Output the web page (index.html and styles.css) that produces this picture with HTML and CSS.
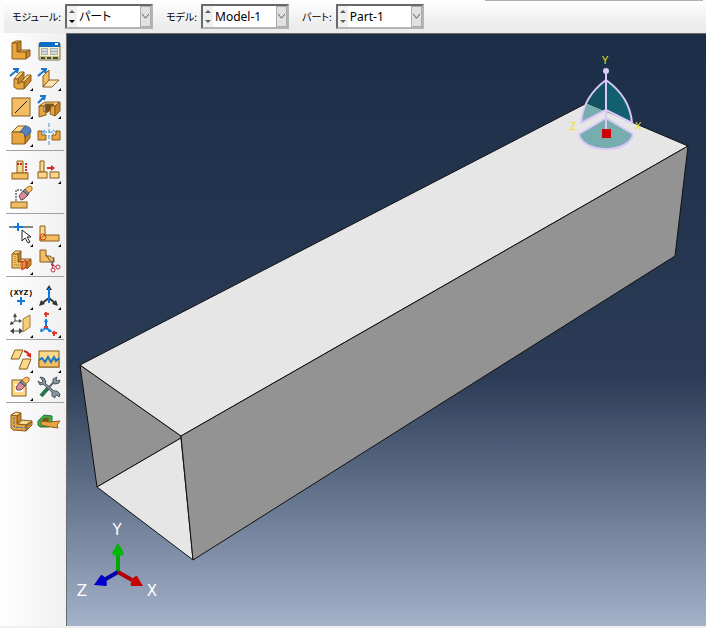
FILE: index.html
```html
<!DOCTYPE html>
<html lang="ja">
<head>
    <meta charset="UTF-8">
    <meta name="viewport" content="width=device-width, initial-scale=1.0">
    <title>Part-1</title>
    <link rel="stylesheet" href="styles.css">
</head>
<body>
    <header class="context-bar">
        <div class="field">
            <label for="module">モジュール:</label>
            <div class="combo">
                <span class="spinner"><i class="up"></i><i class="down active"></i></span>
                <select id="module"><option>パート</option></select>
                <span class="chevron"><svg viewBox="0 0 10 22"><path d="M1 8l4 5 4-5"/></svg></span>
            </div>
        </div>
        <div class="field">
            <label for="model">モデル:</label>
            <div class="combo">
                <span class="spinner"><i class="up"></i><i class="down"></i></span>
                <select id="model"><option>Model-1</option></select>
                <span class="chevron"><svg viewBox="0 0 10 22"><path d="M1 8l4 5 4-5"/></svg></span>
            </div>
        </div>
        <div class="field">
            <label for="part">パート:</label>
            <div class="combo">
                <span class="spinner"><i class="up"></i><i class="down"></i></span>
                <select id="part"><option>Part-1</option></select>
                <span class="chevron"><svg viewBox="0 0 10 22"><path d="M1 8l4 5 4-5"/></svg></span>
            </div>
        </div>
    </header>

    <div class="workspace">
        <nav class="toolbox">
            <!-- create / edit solids -->
            <div class="tool-group">
                <button class="tool" aria-label="Create part">
                    <svg viewBox="0 0 28 28" class="solid">
                        <path class="hi" d="M5 7l4-2h5l-4 2zM10 16l4-2h9l-4 2z"/>
                        <path class="lo" d="M10 7l4-2v9l-4 2zM19 16l4-2v6l-4 3z"/>
                        <path d="M5 7h5v9h9v7H5z"/>
                    </svg>
                </button>
                <button class="tool" aria-label="Part manager">
                    <svg viewBox="0 0 28 28">
                        <rect x="4" y="7" width="21" height="17" rx="1" fill="#fff0c8" stroke="#6b6b4c"/>
                        <path d="M4 11V8q0-2 2-2h17q2 0 2 2v3z" fill="#0a6bc8"/>
                        <path d="M20 8h3" stroke="#fff" stroke-width="2"/>
                        <path d="M6 12h7v7H6zM15 12h8v7h-8z" fill="#a9b4b8"/>
                        <path d="M7 14h5M16 14h6M7 17h5M16 17h6" stroke="#fff"/>
                        <path d="M5 20h19v3H5z" fill="#c9c48f"/>
                        <path d="M6 22h4M12 22h4M18 22h5" stroke="#4c4a2c" stroke-width="2"/>
                    </svg>
                </button>
                <button class="tool more" aria-label="Solid extrude">
                    <svg viewBox="0 0 28 28" class="solid">
                        <path class="hi" d="M7 15l6-7h4l-6 7zM14 18l6-7h4l-7 7z"/>
                        <path class="lo" d="M11 15l6-7v6l-3 4-3 2zM17 18l7-7v6l-7 8z"/>
                        <path d="M7 15h4v5l3-2h3v7h-7l-3-2z"/>
                        <path class="blue" d="M3 12l7-6M6 5h5l-1 4"/>
                    </svg>
                </button>
                <button class="tool more" aria-label="Shell extrude">
                    <svg viewBox="0 0 28 28" class="solid">
                        <path class="mid" d="M8 12l6-6v10l-6 7z"/>
                        <path class="pale" d="M14 16h10l-7 7H8z"/>
                        <path class="blue" d="M3 12l7-6M6 5h5l-1 4"/>
                    </svg>
                </button>
                <button class="tool more" aria-label="Wire">
                    <svg viewBox="0 0 28 28" class="solid">
                        <rect class="mid" x="5" y="6" width="18" height="18"/>
                        <path d="M8 21L20 9" stroke="#222"/>
                    </svg>
                </button>
                <button class="tool more" aria-label="Cut extrude">
                    <svg viewBox="0 0 28 28" class="solid">
                        <path class="hi" d="M4 14l6-4h15l-5 4z"/>
                        <path class="dark" d="M10 12h9l-3 6-5 3z"/>
                        <path d="M4 14h5v6l2-1v4l-7 2zM16 14h4v10l-5-2z"/>
                        <path class="lo" d="M20 14l5-4v9l-5 5z"/>
                        <path class="blue" d="M3 11l6-6M5 4h5l-1 4"/>
                    </svg>
                </button>
                <button class="tool more" aria-label="Round or fillet">
                    <svg viewBox="0 0 28 28" class="solid">
                        <path class="hi" d="M5 12l6-6h8l-6 6z"/>
                        <path class="lo" d="M18 16l5-6v8l-5 6z"/>
                        <path d="M5 12h8q5 0 5 5v7H5z"/>
                        <path d="M13 12l5-6q6 0 6 6l-6 5q0-5-5-5z" fill="#5484bd" stroke="#3d5f8c"/>
                    </svg>
                </button>
                <button class="tool" aria-label="Mirror part">
                    <svg viewBox="0 0 28 28" class="solid">
                        <path d="M3 11h4v4h4v5H3z"/>
                        <path d="M25 11h-4v4h-4v5h8z"/>
                        <path class="dashed" d="M14 3v23"/>
                        <path class="dashed" d="M8 12h12M10 10l-3 2 3 2M18 10l3 2-3 2"/>
                    </svg>
                </button>
            </div>
            <!-- feature editing -->
            <div class="tool-group">
                <button class="tool more" aria-label="Edit feature">
                    <svg viewBox="0 0 28 28" class="solid">
                        <path class="hi" d="M10 4h6v12h-6z"/>
                        <rect class="mid" x="5" y="16" width="16" height="6"/>
                        <path class="red" d="M10 7h6M19 6v10" stroke-dasharray="2 1"/>
                    </svg>
                </button>
                <button class="tool more" aria-label="Regenerate feature">
                    <svg viewBox="0 0 28 28" class="solid">
                        <path class="hi" d="M5 4h4v11H5z"/>
                        <rect class="hi" x="3" y="15" width="9" height="6"/>
                        <rect class="hi" x="15" y="15" width="9" height="6"/>
                        <path class="red" d="M12 11h5"/>
                        <path d="M16 8l4 3-4 3z" fill="#cf2b20" stroke="none"/>
                    </svg>
                </button>
                <button class="tool" aria-label="Delete feature">
                    <svg viewBox="0 0 28 28" class="solid">
                        <rect class="mid" x="4" y="17" width="16" height="6"/>
                        <path d="M9 16V5h7" fill="none" stroke="#222" stroke-dasharray="2 1"/>
                        <path d="M12 11l4-5 5 4-4 4-3 1z" fill="#d98a94" stroke="#704850"/>
                        <path d="M16 6l2-2 4 4-1 2z" fill="#758ba5" stroke="#46586f"/>
                        <path d="M18 4l4-3 3 1v3l-3 3z" fill="#f8c070" stroke="#a97020"/>
                    </svg>
                </button>
            </div>
            <!-- partition and repair -->
            <div class="tool-group">
                <button class="tool more" aria-label="Partition edge">
                    <svg viewBox="0 0 28 28">
                        <path d="M2 7h5M16 7h10" stroke="#111"/>
                        <path d="M7 7h9M11 3v8" stroke="#1179dd" stroke-width="2"/>
                        <path d="M15 10v11l3-3 3 5 2-1-3-5h4z" fill="#fff" stroke="#222"/>
                    </svg>
                </button>
                <button class="tool more" aria-label="Partition face">
                    <svg viewBox="0 0 28 28" class="solid">
                        <path class="hi" d="M5 6h5v9l-5 5z"/>
                        <path class="mid" d="M10 15h14v6H5v-3z"/>
                        <circle cx="8" cy="17" r="3" fill="none" stroke="#dd3a16"/>
                    </svg>
                </button>
                <button class="tool more" aria-label="Partition cell">
                    <svg viewBox="0 0 28 28" class="solid">
                        <path class="hi" d="M5 6l3-3h6l-3 3zM11 13l3-2h10l-4 3z"/>
                        <path class="lo" d="M11 6l3-3v9l-3 2zM20 14l4-3v6l-4 4z"/>
                        <path class="mid" d="M5 6h6v8h9v6H5z"/>
                        <path d="M8 8v9h7" fill="none" stroke="#8b742c" stroke-dasharray="1 1"/>
                        <path d="M15 14l4-2v7l-4 3z" fill="#ee8b4a" stroke="#d22415"/>
                    </svg>
                </button>
                <button class="tool" aria-label="Remove faces">
                    <svg viewBox="0 0 28 28" class="solid">
                        <path class="mid" d="M5 2h6v6h4l4 3v3H5z"/>
                        <path d="M11 7l8 11M19 9l-2 9" stroke="#555"/>
                        <circle cx="18" cy="22" r="2" fill="#fff" stroke="#bd2a38"/>
                        <circle cx="23" cy="19" r="2" fill="#fff" stroke="#bd2a38"/>
                        <path d="M16 16l5 3M17 16l1 4" stroke="#bd2a38"/>
                    </svg>
                </button>
            </div>
            <!-- datum geometry -->
            <div class="tool-group">
                <button class="tool more" aria-label="Datum point">
                    <svg viewBox="0 0 28 28">
                        <text class="xyz" x="14" y="12">(XYZ)</text>
                        <path d="M10 18h8M14 14v8" stroke="#1179dd" stroke-width="2"/>
                    </svg>
                </button>
                <button class="tool more" aria-label="Datum axis">
                    <svg viewBox="0 0 28 28">
                        <path d="M14 15l-8 6M14 15l7 6" stroke="#333" stroke-width="2"/>
                        <path d="M14 2l-3 5h6zM4 23l2-6 4 4zM23 23l-6-2 4-4z" fill="#333"/>
                        <path d="M14 5v15" stroke="#1179dd" stroke-width="2"/>
                    </svg>
                </button>
                <button class="tool more" aria-label="Datum plane">
                    <svg viewBox="0 0 28 28">
                        <path d="M8 4v6h5M8 10l-3 2M5 20h9" fill="none" stroke="#444" stroke-width="1"/>
                        <path d="M8 2l-2 4h4zM15 10l-3-2v4zM3 14l1-4 3 3zM3 20l4-3v6zM16 20l-4-3v6z" fill="#444"/>
                        <path d="M16 8l7-4v12l-7 5z" fill="#f8ce72" stroke="#9b7840"/>
                    </svg>
                </button>
                <button class="tool more" aria-label="Datum coordinate system">
                    <svg viewBox="0 0 28 28">
                        <path d="M11 11v6l-5 3M11 17l5 3" fill="none" stroke="#1179dd" stroke-width="2" stroke-dasharray="4 1"/>
                        <path d="M11 7l-2 4h4zM5 21l1-4 3 3zM17 21h-4l2-3z" fill="#1179dd"/>
                        <path d="M9 3h5M11 1v5M9 16h4M17 22h5M19 20v5" stroke="#e03a2e" stroke-width="2"/>
                    </svg>
                </button>
            </div>
            <!-- mesh tools -->
            <div class="tool-group">
                <button class="tool more" aria-label="Create midsurface">
                    <svg viewBox="0 0 28 28" class="solid">
                        <path class="hi" d="M8 4h8l-4 9H4z"/>
                        <path class="hi" d="M16 13h8l-4 10h-8z"/>
                        <path class="red" d="M17 5q4 1 5 4"/>
                        <path d="M19 9l5-2v5z" fill="#d22" stroke="none"/>
                    </svg>
                </button>
                <button class="tool more" aria-label="Repair small edges">
                    <svg viewBox="0 0 28 28" class="solid">
                        <rect class="hi" x="4" y="5" width="20" height="16"/>
                        <path class="mid" d="M4 14l3-2 3 4 3-5 3 5 3-5 2 4 3-3v9H4z"/>
                        <path class="blue" d="M4 14l3-2 3 4 3-5 3 5 3-5 2 4 3-3"/>
                    </svg>
                </button>
                <button class="tool more" aria-label="Edit mesh">
                    <svg viewBox="0 0 28 28" class="solid">
                        <rect class="hi" x="5" y="6" width="14" height="16"/>
                        <path d="M8 10h8v8H8z" fill="#fff" stroke="none"/>
                        <path d="M9 13l4-5 5 4-4 4h-4z" fill="#d98a94" stroke="#704850"/>
                        <path d="M13 8l2-2 4 4-1 2z" fill="#758ba5" stroke="#46586f"/>
                        <path d="M15 6l4-3 3 1v3l-3 3z" fill="#f8c070" stroke="#a97020"/>
                    </svg>
                </button>
                <button class="tool" aria-label="Geometry repair">
                    <svg viewBox="0 0 28 28">
                        <path d="M14 13l-8 9" stroke="#28744c" stroke-width="4"/>
                        <path d="M20 7l-8 8" stroke="#59656b" stroke-width="2"/>
                        <path d="M5 3l4 1 2 4-1 1 9 8h3l3 3-1 3-2-2-2 1v2l-3-2v-4l-9-8-3 1-2-4 3 2 2-2z" fill="#8b999f" stroke="#48565d"/>
                        <path d="M22 3l-4 2v4l2 1 4-1 1-3-3 1-1-1z" fill="#8b999f" stroke="#48565d"/>
                    </svg>
                </button>
            </div>
            <div class="tool-group">
                <button class="tool" aria-label="Assign midsurface">
                    <svg viewBox="0 0 28 28" class="solid">
                        <path class="hi" d="M4 6l5-3 5 1-4 3zM10 15l5-4 10 1-6 4z"/>
                        <path class="lo" d="M10 7l4-3v8l-4 3zM19 16l6-4v4l-6 6z"/>
                        <path d="M4 6l6 1v8l9 1v6l-13-1-2-2z"/>
                        <path d="M7 8v10l10 1 5-4" fill="none" stroke="#3975a7" stroke-dasharray="3 1"/>
                    </svg>
                </button>
                <button class="tool" aria-label="Offset faces">
                    <svg viewBox="0 0 28 28" class="solid">
                        <path d="M3 12l6-6 8 1v4l-3 7H5l-2-2z" fill="#2fb64b" stroke="#27713a"/>
                        <path class="dark" d="M7 12l2-3h5l-1 3z"/>
                        <path d="M6 12l8 1 11-1-3 4 1 3-7-1-10-2z"/>
                    </svg>
                </button>
            </div>
        </nav>

        <main class="viewport">
            <svg viewBox="67 34 639 592" preserveAspectRatio="xMinYMin meet">
                <!-- hollow beam -->
                <g class="beam">
                    <path class="side" d="M80 365L181 436V438L97 487z"/>
                    <path class="face" d="M97 487L181 438L193 560z"/>
                    <path class="face" d="M80 365L587 103L688 146L181 436z"/>
                    <path class="side" d="M181 436L688 146L675 256L193 560z"/>
                </g>

                <!-- view compass -->
                <g class="compass">
                    <path class="fan" d="M606 80Q583 97 581 123L606 110z"/>
                    <path class="fan solid-fan" d="M606 80Q630 97 632 123L606 110z"/>
                    <path class="fan" d="M606 118L579 134C582 154 630 154 633 134z"/>
                    <path d="M606 71V130"/>
                    <circle cx="606" cy="71" r="3"/>
                    <rect x="602" y="129" width="9" height="9"/>
                    <text x="605" y="64">Y</text>
                    <text x="573" y="130">Z</text>
                    <text x="638" y="130">X</text>
                </g>

                <!-- axis triad -->
                <g class="triad">
                    <path d="M118 572V554" stroke="#00a800"/>
                    <path d="M118 543l6 10q-1 3-6 3t-6-3z" fill="#00b800"/>
                    <path d="M118 572l-14 8" stroke="#0000a8"/>
                    <path d="M94 585l7-10q3 0 5 5t0 6z" fill="#0000cc"/>
                    <path d="M118 572l14 8" stroke="#b00000"/>
                    <path d="M143 586l-6-10q-3 0-5 4t-1 6z" fill="#c80000"/>
                    <text x="117" y="535">Y</text>
                    <text x="82" y="596">Z</text>
                    <text x="152" y="596">X</text>
                </g>
            </svg>
        </main>
    </div>
</body>
</html>
```
FILE: styles.css
```css
:root {
    --panel: #f0f0f0;
    --line: #a0a0a0;
    --orange: #e9a63f;
    --orange-light: #fbd88a;
    --orange-dark: #c88428;
    --outline: #8a5c1c;
    --blue: #1976c8;
}

* {
    margin: 0;
    padding: 0;
    box-sizing: border-box;
}

body {
    min-height: 100vh;
    display: flex;
    flex-direction: column;
    background: var(--panel);
    color: #000;
    font-family: "Noto Sans", "Noto Sans CJK JP", sans-serif;
    font-size: 12px;
}

/* context bar */
.context-bar {
    position: relative;
    display: flex;
    align-items: center;
    gap: 13px;
    height: 33px;
    padding-left: 8px;
    border-left: 4px solid #fbfbfb;
    background: linear-gradient(#fff, #ececec 80%);
}

.context-bar::before {
    content: "";
    position: absolute;
    top: 0;
    right: 3px;
    width: 31%;
    height: 1px;
    background: #b0b0b0;
}

.field {
    display: flex;
    align-items: center;
    gap: 4px;
}

.field label {
    font-family: "Noto Sans CJK JP", sans-serif;
    font-size: 10px;
    font-feature-settings: "palt";
    white-space: nowrap;
}

.combo {
    position: relative;
    display: flex;
    width: 88px;
    height: 25px;
    border: 2px solid;
    border-color: #696969 #b4b4b4 #b4b4b4 #696969;
    background: #fff;
}

.spinner {
    display: flex;
    flex-direction: column;
    justify-content: space-around;
    align-items: center;
    width: 10px;
    background: #f0f0f0;
}

.spinner i {
    border: 3px solid transparent;
}

.spinner .up {
    border-top: 0;
    border-bottom-color: #606060;
}

.spinner .down {
    border-bottom: 0;
    border-top-color: #606060;
}

.spinner .active {
    border-top-color: #000;
}

.combo select {
    flex: 1;
    min-width: 0;
    padding-left: 2px;
    border: 0;
    appearance: none;
    background: transparent;
    color: #000;
    font: inherit;
    font-feature-settings: "palt";
}

.chevron {
    position: absolute;
    top: 0;
    right: 0;
    width: 11px;
    height: 100%;
    background: #e1e1e1;
    border: 1px solid #adadad;
    pointer-events: none;
}

.chevron svg {
    display: block;
    width: 100%;
    height: 100%;
    fill: none;
    stroke: #444;
}

/* toolbox */
.workspace {
    flex: 1;
    display: flex;
    padding-bottom: 2px;
}

.toolbox {
    flex: none;
    width: 66px;
    padding: 3px 2px 0 6px;
    background: linear-gradient(90deg, #fff, var(--panel));
}

.tool-group {
    display: grid;
    grid-template-columns: 28px 28px;
    grid-auto-rows: 28px;
    padding: 6px 0 0 1px;
    border-bottom: 1px solid var(--line);
}

.tool-group:first-child {
    padding: 0 0 2px 1px;
}

.tool-group:last-child {
    border-bottom: 0;
}

.tool {
    position: relative;
    border: 0;
    background: none;
}

.tool svg {
    display: block;
    width: 28px;
    height: 28px;
}

.tool.more::after {
    content: "";
    position: absolute;
    right: 2px;
    bottom: 1px;
    border-left: 3px solid transparent;
    border-bottom: 3px solid #000;
}

.solid {
    fill: var(--orange);
    stroke: var(--outline);
}

.solid .hi {
    fill: var(--orange-light);
}

.solid .pale {
    fill: #fde5b8;
}

.solid .mid {
    fill: #f3bd62;
}

.solid .lo {
    fill: var(--orange-dark);
}

.solid .dark {
    fill: #70501c;
}

.solid .blue {
    fill: none;
    stroke: var(--blue);
    stroke-width: 2;
}

.solid .dashed {
    fill: none;
    stroke: #3a94e0;
    stroke-dasharray: 4 2;
}

.solid .red {
    fill: none;
    stroke: #cf2b20;
    stroke-width: 2;
}

.xyz {
    font: bold 8px "Liberation Mono", monospace;
    text-anchor: middle;
}

/* viewport */
.viewport {
    flex: 1;
    min-width: 0;
    border-top: 1px solid #6d6d6d;
    border-left: 1px solid #6d6d6d;
    background: linear-gradient(#1b2d47, #2c3c56 58%, #a3b1c9);
}

.viewport svg {
    display: block;
    width: 100%;
}

.beam path {
    stroke: #111;
    stroke-linejoin: round;
}

.face {
    fill: #e6e6e6;
}

.side {
    fill: #939393;
}

.compass path {
    fill: none;
    stroke: #d9c8f8;
    stroke-width: 2;
    stroke-linejoin: round;
}

.compass .fan {
    fill: rgba(10, 115, 120, 0.5);
}

.compass .solid-fan {
    fill: #12606f;
}

.compass circle {
    fill: #d9c8f8;
}

.compass rect {
    fill: #c00;
}

.compass text {
    fill: #f0e020;
    font: 10px "Liberation Sans", sans-serif;
    text-anchor: middle;
}

.triad path {
    stroke-width: 4;
}

.triad text {
    fill: #fff;
    font: 15px "DejaVu Sans", sans-serif;
    text-anchor: middle;
}
```
